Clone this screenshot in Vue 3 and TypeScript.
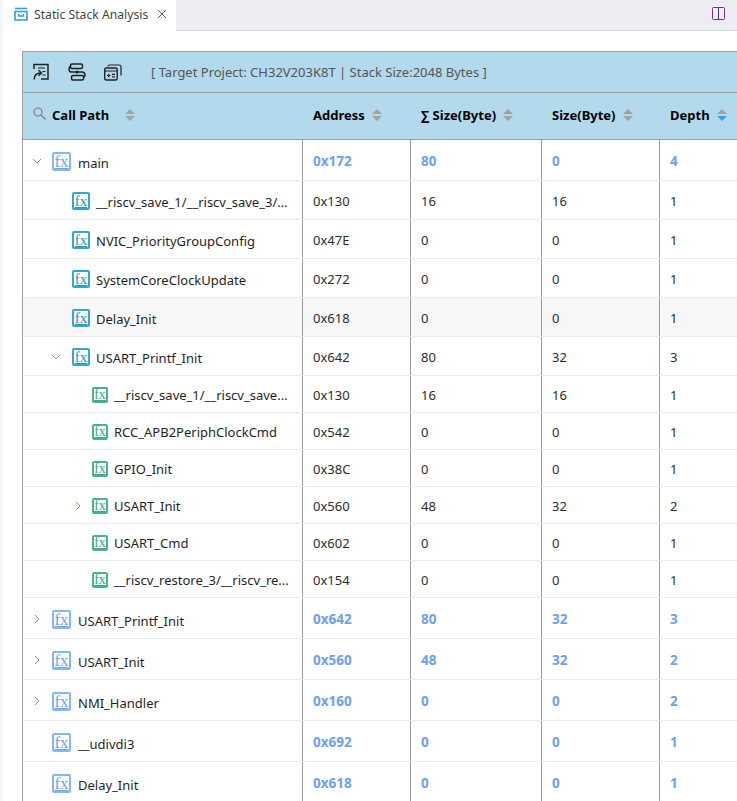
<script setup lang="ts">
interface Row {
  name: string
  addr: string
  total: string
  size: string
  depth: string
  level: 0 | 1 | 2
  arrow?: 'open' | 'closed'
  hover?: boolean
}

const rows: Row[] = [
  { name: 'main', addr: '0x172', total: '80', size: '0', depth: '4', level: 0, arrow: 'open' },
  { name: '__riscv_save_1/__riscv_save_3/...', addr: '0x130', total: '16', size: '16', depth: '1', level: 1 },
  { name: 'NVIC_PriorityGroupConfig', addr: '0x47E', total: '0', size: '0', depth: '1', level: 1 },
  { name: 'SystemCoreClockUpdate', addr: '0x272', total: '0', size: '0', depth: '1', level: 1 },
  { name: 'Delay_Init', addr: '0x618', total: '0', size: '0', depth: '1', level: 1, hover: true },
  { name: 'USART_Printf_Init', addr: '0x642', total: '80', size: '32', depth: '3', level: 1, arrow: 'open' },
  { name: '__riscv_save_1/__riscv_save...', addr: '0x130', total: '16', size: '16', depth: '1', level: 2 },
  { name: 'RCC_APB2PeriphClockCmd', addr: '0x542', total: '0', size: '0', depth: '1', level: 2 },
  { name: 'GPIO_Init', addr: '0x38C', total: '0', size: '0', depth: '1', level: 2 },
  { name: 'USART_Init', addr: '0x560', total: '48', size: '32', depth: '2', level: 2, arrow: 'closed' },
  { name: 'USART_Cmd', addr: '0x602', total: '0', size: '0', depth: '1', level: 2 },
  { name: '__riscv_restore_3/__riscv_re...', addr: '0x154', total: '0', size: '0', depth: '1', level: 2 },
  { name: 'USART_Printf_Init', addr: '0x642', total: '80', size: '32', depth: '3', level: 0, arrow: 'closed' },
  { name: 'USART_Init', addr: '0x560', total: '48', size: '32', depth: '2', level: 0, arrow: 'closed' },
  { name: 'NMI_Handler', addr: '0x160', total: '0', size: '0', depth: '2', level: 0, arrow: 'closed' },
  { name: '__udivdi3', addr: '0x692', total: '0', size: '0', depth: '1', level: 0 },
  { name: 'Delay_Init', addr: '0x618', total: '0', size: '0', depth: '1', level: 0 },
]

const columns = [
  { label: 'Address', active: false },
  { label: '∑ Size(Byte)', active: false },
  { label: 'Size(Byte)', active: false },
  { label: 'Depth', active: true },
]
</script>

<template>
  <div class="page">
    <div class="thumb"></div>
    <header class="tabbar">
      <div class="tab">
        <svg class="tab-icon" width="16" height="16" viewBox="0 0 16 16" fill="none" stroke="#2a9fe0" stroke-width="1.6">
          <path d="M2 2.500h12" />
          <path d="M2 5.500h12v8.500H2z" />
          <path d="M5.500 8v2h5V8" stroke-width="1.300" />
        </svg>
        <span class="tab-title">Static Stack Analysis</span>
        <svg class="tab-close" width="10" height="10" viewBox="0 0 10 10" stroke="#555" stroke-width="1" fill="none">
          <path d="M1 1l8 8M9 1l-8 8" />
        </svg>
      </div>
      <svg class="split" width="13" height="13" viewBox="0 0 13 13" fill="none" stroke="#7b2f86" stroke-width="1">
        <rect x="0.500" y="0.500" width="12" height="12" rx="1" />
        <path d="M6.500 0.500v12" stroke="#3c3c60" />
      </svg>
    </header>

    <main class="content">
      <section class="table">
        <div class="toolbar">
          <div class="tools">
            <svg width="18" height="18" viewBox="0 0 18 18" fill="none" stroke="#222" stroke-width="1.500">
              <path d="M1 6V1.500h14V16H8" />
              <path d="M5 5h7M9.500 8.500h3M9.500 12h3" stroke-width="1.200" />
              <path d="M1.200 16.500c0-4 2-6.500 6.800-6.500M5.500 7.300 8.500 10l-3 2.700" />
            </svg>
            <svg width="18" height="18" viewBox="0 0 18 18" fill="none" stroke="#222" stroke-width="1.500">
              <rect x="2.500" y="1" width="12" height="4.500" rx="1.500" />
              <rect x="3.500" y="12.500" width="12" height="4.500" rx="1.500" />
              <path d="M2.500 3.200C.200 5 .500 9 4 9h10c3.500 0 3.800 4 1.500 5.800" />
              <circle cx="9" cy="9" r="1.600" fill="#222" stroke="none" />
            </svg>
            <svg width="18" height="18" viewBox="0 0 18 18" fill="none" stroke="#222" stroke-width="1.400">
              <rect x="0.700" y="5" width="12.500" height="12" rx="1.500" />
              <path d="M4 3.500c0-1 .5-1.500 1.500-1.500H15c1.500 0 2 .5 2 2v8.500" stroke-width="1.200" />
              <path d="M.7 8h12.500M3 12.500h3.500M4.700 10.800v3.400M8 11.300h3M8 13.800h3" stroke-width="1.200" />
            </svg>
          </div>
          <span class="target">[ Target Project: CH32V203K8T | Stack Size:2048 Bytes ]</span>
        </div>

        <div class="grid-row head">
          <div class="cell head-name">
            <svg class="search" width="13" height="13" viewBox="0 0 13 13" fill="none" stroke="#777" stroke-width="1.100">
              <circle cx="5" cy="5" r="4" />
              <path d="M8 8l4.500 4.500" />
            </svg>
            <span class="head-label">Call Path</span>
            <span class="sort name-sort"><i class="up"></i><i class="down"></i></span>
          </div>
          <div v-for="c in columns" :key="c.label" class="cell head-cell">
            <span class="head-label">{{ c.label }}</span>
            <span class="sort"><i class="up"></i><i class="down" :class="{ on: c.active }"></i></span>
          </div>
        </div>

        <div
          v-for="(r, i) in rows"
          :key="i"
          class="grid-row body"
          :class="['lv' + r.level, { hover: r.hover }]"
        >
          <div class="cell name-cell">
            <span class="arrow-slot">
              <svg v-if="r.arrow === 'open'" width="10" height="10" viewBox="0 0 10 10" fill="none" stroke="#8a8f9a" stroke-width="1">
                <path d="M1 3l4 4 4-4" />
              </svg>
              <svg v-else-if="r.arrow === 'closed'" width="10" height="10" viewBox="0 0 10 10" fill="none" :stroke="r.level === 2 ? '#b08a50' : '#6f8fb5'" stroke-width="1">
                <path d="M3 1l4 4-4 4" />
              </svg>
            </span>
            <span class="fx"><span class="fx-text">fx</span></span>
            <span class="name">{{ r.name }}</span>
          </div>
          <div class="cell val">{{ r.addr }}</div>
          <div class="cell val">{{ r.total }}</div>
          <div class="cell val">{{ r.size }}</div>
          <div class="cell val">{{ r.depth }}</div>
        </div>
      </section>
    </main>
  </div>
</template>

<style>
html, body { margin: 0; background: #fff; overflow: hidden; }
</style>

<style scoped>
.page {
  position: relative;
  width: 737px;
  height: 801px;
  overflow: hidden;
  background: #fff;
  font-family: "Noto Sans", "Open Sans", sans-serif;
  font-size: 13px;
  color: #1f1f1f;
  border-left: 3px solid #f6f6f6;
  box-sizing: border-box;
}
.thumb {
  position: absolute;
  left: -3px;
  top: 170px;
  width: 3px;
  height: 355px;
  background: #d6d6d6;
}
.tabbar {
  height: 31px;
  box-sizing: border-box;
  background: #ecedf2;
  border-bottom: 1px solid #dcdcdf;
  display: flex;
  align-items: flex-start;
  justify-content: space-between;
  padding-right: 12px;
}
.tab {
  width: 173px;
  height: 31px;
  background: #fff;
  box-sizing: border-box;
  display: flex;
  align-items: center;
  padding: 0 0 3px 10px;
  margin-bottom: -1px;
}
.tab-icon { flex: none; }
.tab-title { margin-left: 5px; font-size: 12.2px; color: #444; white-space: nowrap; width: 118px; }
.tab-close { flex: none; margin-left: 5px; }
.split { margin-top: 7px; }
.content { padding: 20px 0 0 19px; }
.table {
  width: 720px;
  border-top: 1px solid #a0a0a0;
  border-left: 1px solid #a0a0a0;
  box-sizing: border-box;
}
.toolbar {
  height: 41px;
  box-sizing: border-box;
  background: #b3d9ec;
  border-bottom: 1px solid #a0a0a0;
  display: flex;
  align-items: center;
  padding-left: 10px;
}
.tools { display: flex; gap: 18px; }
.tools svg { display: block; }
.tools svg:first-child { margin-right: -1px; }
.target { margin-left: 29px; font-size: 13px; color: #555; white-space: nowrap; }
.grid-row {
  display: grid;
  grid-template-columns: 279px 108px 131px 118px 78px;
}
.head {
  height: 47px;
  box-sizing: border-box;
  background: #b3d9ec;
  border-bottom: 1px solid #a0a0a0;
  color: #000;
  font-weight: 700;
  font-size: 13px;
}
.cell { display: flex; align-items: center; min-width: 0; white-space: nowrap; box-sizing: border-box; }
.head-name { padding-left: 10px; align-items: flex-start; padding-top: 13px; }
.head-cell { padding-left: 11px; align-items: flex-start; padding-top: 13px; }
.search { flex: none; margin-top: 1px; margin-right: 6px; }
.head-label { line-height: 18px; }
.sort { display: inline-flex; flex-direction: column; gap: 2px; margin-left: 7px; margin-top: 3px; }
.name-sort { margin-left: 16px; }
.sort i { display: block; width: 0; height: 0; border-left: 5px solid transparent; border-right: 5px solid transparent; }
.sort .up { border-bottom: 5px solid #a2a2a2; }
.sort .down { border-top: 5px solid #a2a2a2; }
.sort .down.on { border-top-color: #3f9cf5; }
.body { border-bottom: 1px solid #e9e9f0; box-sizing: border-box; }
.body .cell { padding-top: 2px; }
.body .cell + .cell { border-left: 1px solid #999; padding-left: 10px; }
.body.hover { background: #f7f7f7; }
.lv0 { height: 41px; }
.lv1 { height: 39px; }
.lv2 { height: 37px; }
.arrow-slot { width: 10px; height: 10px; flex: none; display: flex; }
.lv0 .arrow-slot { margin-left: 9px; margin-right: 10px; }
.lv1 .arrow-slot { margin-left: 28px; margin-right: 11px; }
.lv2 .arrow-slot { margin-left: 50px; margin-right: 9px; }
.arrow-slot svg { display: block; }
.fx {
  flex: none;
  box-sizing: border-box;
  display: flex;
  align-items: center;
  justify-content: center;
  font-family: "Liberation Serif", serif;
  border-radius: 2px;
}
.fx-text { text-decoration: underline; text-underline-offset: 1px; text-decoration-thickness: 1px; line-height: 1; }
.lv0 .fx { width: 19px; height: 19px; border: 2px solid #84b6fb; color: #6ea3ee; font-size: 17px; }
.lv1 .fx { width: 18px; height: 18px; border: 2px solid #35a6cc; color: #2496bb; font-size: 15px; }
.lv2 .fx { width: 16px; height: 16px; border: 2px solid #45b68c; color: #38a87e; font-size: 14px; }
.name { margin-left: 7px; font-size: 13px; color: #1f1f1f; }
.lv0 .name { padding-top: 4px; }
.lv1 .name { margin-left: 6px; padding-top: 1px; }
.lv2 .name { margin-left: 6px; }
.val { color: #2c2c2c; font-size: 13px; }
.lv0 .val { color: #6e9ff5; font-weight: 700; font-size: 13.500px; }
</style>
